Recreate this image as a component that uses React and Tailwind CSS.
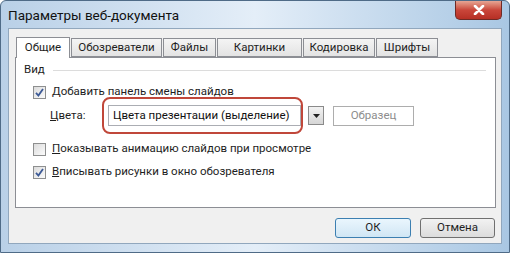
import { useState } from 'react';

const tabs = [
  { label: 'Общие', w: 'w-[54px]' },
  { label: 'Обозреватели', w: 'w-[91px]' },
  { label: 'Файлы', w: 'w-[53px]' },
  { label: 'Картинки', w: 'w-[85px]' },
  { label: 'Кодировка', w: 'w-[72px]' },
  { label: 'Шрифты', w: 'w-[62px]' },
];

const Checkbox = ({ checked, onToggle }) => (
  <button
    onClick={onToggle}
    className="w-[13px] h-[13px] shrink-0 border border-[#8e8f8f] bg-gradient-to-br from-[#dcdcdc] to-[#fbfbfb] flex items-center justify-center p-0"
  >
    {checked && (
      <svg width="9" height="9" viewBox="0 0 9 9">
        <path d="M1 4.8 L3.4 7.5 L8 1" fill="none" stroke="#3d5a96" strokeWidth="1.8" />
      </svg>
    )}
  </button>
);

const CheckRow = ({ checked, onToggle, hot, rest, className }) => (
  <div className={`flex items-center h-[14px] pl-[17px] ${className}`}>
    <Checkbox checked={checked} onToggle={onToggle} />
    <span className="ml-[6px] text-[11.5px] leading-none text-[#1e1e1e]">
      <span className="underline">{hot}</span>
      {rest}
    </span>
  </div>
);

export default function App() {
  const [active, setActive] = useState(0);
  const [panel, setPanel] = useState(true);
  const [anim, setAnim] = useState(false);
  const [fit, setFit] = useState(true);

  return (
    <div
      className="w-[510px] h-[253px] flex flex-col bg-gradient-to-r from-[#b9d0e7] via-[#e4eef8] to-[#a9c7e3] border border-[#4f6b87] rounded-t-[6px] overflow-hidden"
      style={{ fontFamily: 'Roboto, "Liberation Sans", sans-serif' }}
    >
      <div className="h-[27px] flex items-start justify-between pl-[7px] pr-[7px]">
        <span className="mt-[5px] text-[13.5px] leading-[18px] text-[#111]">Параметры веб-документа</span>
        <button className="w-[47px] h-[19px] rounded-b-[5px] border border-[#6e2a25] border-t-0 bg-gradient-to-b from-[#e5a594] via-[#c9463a] to-[#b62f24] flex items-center justify-center">
          <svg width="12" height="10" viewBox="0 0 12 10">
            <path d="M2 1 L10 9 M10 1 L2 9" stroke="#fff" strokeWidth="2.6" strokeLinecap="round" />
          </svg>
        </button>
      </div>

      <div className="mx-[7px] flex-1 mb-[8px] bg-[#f0f0f0] border border-[#91a7bd] flex flex-col">
        <div className="flex items-end gap-[1px] pl-[7px] mt-[7px] h-[21px]">
          {tabs.map((t, i) => (
            <button
              key={t.label}
              onClick={() => setActive(i)}
              className={`${t.w} text-[11.5px] leading-none text-[#1e1e1e] border border-[#8c8e94] ${
                i === active
                  ? 'h-[21px] bg-white border-b-0 mb-[-1px] relative z-10'
                  : 'h-[19px] bg-gradient-to-b from-[#f4f4f4] to-[#e3e3e3]'
              }`}
            >
              {t.label}
            </button>
          ))}
        </div>

        <div className="mx-[6px] w-[481px] h-[151px] bg-white border border-[#8c8e94] flex flex-col">
          <div className="flex items-center mt-[5px] h-[14px] pl-[8px] pr-[9px]">
            <span className="text-[11.5px] leading-none text-[#1e1e1e]">Вид</span>
            <div className="flex-1 ml-[8px] h-px bg-[#dcdcdc]" />
          </div>

          <CheckRow
            className="mt-[8px]"
            checked={panel}
            onToggle={() => setPanel(!panel)}
            hot="Д"
            rest="обавить панель смены слайдов"
          />

          <div className="flex items-center mt-[-2px] h-[37px] pl-[34px]">
            <span className="w-[52px] text-[11.5px] leading-none text-[#1e1e1e]">
              <span className="underline">Ц</span>вета:
            </span>
            <div className="w-[201px] h-[37px] border-2 border-[#c0473a] rounded-[8px] flex items-center pl-[4px]">
              <div className="flex-1 h-[21px] border border-[#abadb3] bg-white flex items-center pl-[4px] text-[11.5px] leading-none text-[#111] whitespace-nowrap">
                Цвета презентации (выделение)
              </div>
            </div>
            <div className="ml-[5px] w-[16px] h-[19px] border border-[#8a8a8a] bg-gradient-to-b from-[#f2f2f2] to-[#d6d6d6] flex items-center justify-center">
              <svg width="7" height="4" viewBox="0 0 7 4">
                <path d="M0 0 H7 L3.5 4 Z" fill="#222" />
              </svg>
            </div>
            <div className="ml-[9px] w-[81px] h-[20px] border border-[#adadad] bg-white flex items-center justify-center text-[11.5px] leading-none text-[#8d8d8d]">
              Образец
            </div>
          </div>

          <CheckRow
            className="mt-[8px]"
            checked={anim}
            onToggle={() => setAnim(!anim)}
            hot="П"
            rest="оказывать анимацию слайдов при просмотре"
          />

          <CheckRow
            className="mt-[9px]"
            checked={fit}
            onToggle={() => setFit(!fit)}
            hot="В"
            rest="писывать рисунки в окно обозревателя"
          />
        </div>

        <div className="flex justify-end gap-[9px] pr-[6px] mt-[10px]">
          <button className="w-[76px] h-[20px] rounded-[3px] border border-[#3c7fb1] bg-gradient-to-b from-[#eaf6fd] to-[#d0e6f4] text-[11.5px] leading-none text-[#1e1e1e]">
            ОК
          </button>
          <button className="w-[75px] h-[20px] rounded-[3px] border border-[#707070] bg-gradient-to-b from-[#f2f2f2] to-[#dcdcdc] text-[11.5px] leading-none text-[#1e1e1e]">
            Отмена
          </button>
        </div>
      </div>
    </div>
  );
}
